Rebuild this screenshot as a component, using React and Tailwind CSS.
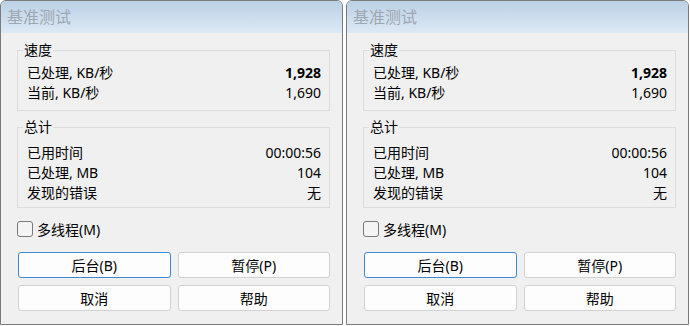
import React from "react";

const FONT = { fontFamily: '"Noto Sans", "Noto Sans CJK SC", sans-serif' };

function Row({ label, value, bold }) {
  return (
    <div className="h-[20px] flex items-center justify-between">
      <span>{label}</span>
      <span className={bold ? "font-bold" : ""}>{value}</span>
    </div>
  );
}

function Group({ title, children, className, inner }) {
  return (
    <fieldset className={"border border-[#dcdcdc] pl-[9px] pr-[8px] " + className}>
      <legend className="ml-[-4px] px-[1px] leading-[18px]">{title}</legend>
      <div className={inner}>{children}</div>
    </fieldset>
  );
}

function Btn({ children, focus }) {
  return (
    <div
      className={
        "h-[26px] rounded-[3px] flex items-center justify-center bg-[#fdfdfd] border " +
        (focus ? "border-[#3d8ad4]" : "border-[#d2d2d2]")
      }
    >
      {children}
    </div>
  );
}

function Win() {
  return (
    <div className="w-[343px] h-[325px] border border-[#7b7b7b] rounded-t-[6px] bg-[#f0f0f0] overflow-hidden flex flex-col text-[14px] text-black">
      <div className="h-[32px] shrink-0 bg-gradient-to-b from-[#bbd0e6] to-[#dde9f5] pl-[6px] flex items-center text-[16px] text-[#9ea7b1]">
        基准测试
      </div>
      <div className="pl-[16px] pr-[12px]">
        <Group title="速度" className="mt-[8px] pb-[8px]" inner="pt-[3px]">
          <Row label="已处理, KB/秒" value="1,928" bold />
          <Row label="当前, KB/秒" value="1,690" />
        </Group>
        <Group title="总计" className="mt-[7px] pb-[5px]" inner="pt-[6px]">
          <Row label="已用时间" value="00:00:56" />
          <Row label="已处理, MB" value="104" />
          <Row label="发现的错误" value="无" />
        </Group>
        <div className="mt-[11px] h-[20px] flex items-center gap-[4px]">
          <div className="w-[16px] h-[16px] rounded-[3px] border border-[#7a7a7a] bg-[#f4f4f4]" />
          <span>多线程(M)</span>
        </div>
        <div className="mt-[13px] pl-[1px] grid grid-cols-2 gap-x-[7px] gap-y-[7px]">
          <Btn focus>后台(B)</Btn>
          <Btn>暂停(P)</Btn>
          <Btn>取消</Btn>
          <Btn>帮助</Btn>
        </div>
      </div>
    </div>
  );
}

export default function App() {
  return (
    <div className="w-[690px] h-[326px] bg-white flex gap-[3px]" style={FONT}>
      <Win />
      <Win />
    </div>
  );
}
